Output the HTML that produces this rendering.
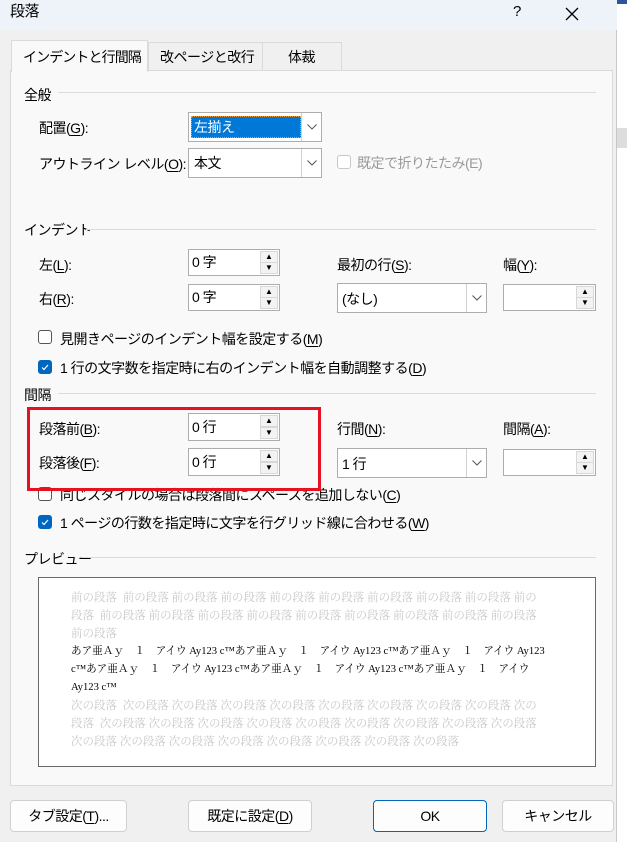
<!DOCTYPE html>
<html><head><meta charset="utf-8"><style>
*{box-sizing:border-box;margin:0;padding:0}
body{width:627px;height:842px;overflow:hidden;background:#f0f0f0;position:relative;font-family:"Liberation Sans","Noto Sans CJK JP",sans-serif;font-size:14px;color:#000}
.a{position:absolute;white-space:nowrap}
.t{line-height:16px;letter-spacing:-0.5px}
u{text-decoration:underline;text-underline-offset:2px}
.box{position:absolute;background:#fff;border:1px solid #adadad}
.spin .up,.spin .dn{position:absolute;right:1px;width:18px;height:12px;background:#f3f3f3;border:1px solid #d8d8d8;font-size:8px;line-height:10px;text-align:center;color:#000}
.spin .up{top:1px}.spin .dn{bottom:1px}
.combo .btn{position:absolute;right:0;top:0;bottom:0;width:20px;border-left:1px solid #d0d0d0;background:#fff}
.combo .btn svg{position:absolute;left:5px;top:11px}
.cb{position:absolute;width:14px;height:14px;border:1px solid #555;border-radius:3px;background:#fff}
.cb.on{background:#0067c0;border-color:#0067c0}
.line{position:absolute;height:1px;background:#dcdcdc}
.btnx{position:absolute;height:32px;background:#fdfdfd;border:1px solid #d0d0d0;border-radius:4px;text-align:center;line-height:30px;font-size:14px;letter-spacing:-0.5px}
.pv{position:absolute;left:71px;font-family:"Liberation Serif","Noto Serif CJK SC",serif;font-size:11.5px;line-height:18px;white-space:nowrap;color:#c8c8c8}
.pk{color:#000;font-size:10.6px}
</style></head><body>
<div class="a" style="left:617px;top:0;width:10px;height:842px;background:#fff"></div>
<div class="a" style="left:617px;top:0;width:10px;height:4px;background:#2b579a"></div>
<div class="a" style="left:617px;top:128px;width:10px;height:20px;background:#ddd"></div>
<div class="a" style="left:0;top:0;width:617px;height:842px;background:#f0f0f0;border-right:1px solid #c8c8c8"></div>
<div class="a" style="left:0;top:0;width:617px;height:30px;background:#eef2f9"></div>
<div class="a t" style="left:10px;top:4px;font-size:15px">段落</div>
<div class="a t" style="left:513px;top:4px;font-size:15px">?</div>
<svg class="a" style="left:565px;top:7px" width="14" height="14"><path d="M1 1L13 13M13 1L1 13" stroke="#000" stroke-width="1.3"/></svg>
<div class="a" style="left:148px;top:42px;width:115px;height:29px;background:#f0f0f0;border:1px solid #dadada"></div>
<div class="a" style="left:263px;top:42px;width:79px;height:29px;background:#f0f0f0;border:1px solid #dadada;border-left:none"></div>
<div class="a" style="left:10px;top:70px;width:603px;height:716px;background:#f9f9f9;border:1px solid #dadada"></div>
<div class="a" style="left:11px;top:40px;width:137px;height:32px;background:#f9f9f9;border:1px solid #dadada;border-bottom:none"></div>
<div class="a t" style="left:23px;top:49px;letter-spacing:-0.9px">インデントと行間隔</div>
<div class="a t" style="left:160px;top:49px">改ページと改行</div>
<div class="a t" style="left:288px;top:49px">体裁</div>
<div class="a t" style="left:24px;top:87px">全般</div><div class="line" style="left:58px;top:92px;width:538px"></div>
<div class="a t" style="left:39px;top:120px">配置(<u>G</u>):</div>
<div class="box combo" style="left:188px;top:112px;width:134px;height:30px"><div class="a" style="left:2px;top:3px;width:110px;height:22px;background:#0078d7;border:1px dotted #f0a040"></div><div class="a t" style="left:5px;top:6px;color:#fff">左揃え</div><div class="btn"><svg width="10" height="6"><path d="M0.5 0.5L5 5L9.5 0.5" fill="none" stroke="#555"/></svg></div></div>
<div class="a t" style="left:39px;top:156px">アウトライン レベル(<u>O</u>):</div>
<div class="box combo" style="left:188px;top:148px;width:134px;height:30px"><div class="a t" style="left:5px;top:6px">本文</div><div class="btn"><svg width="10" height="6"><path d="M0.5 0.5L5 5L9.5 0.5" fill="none" stroke="#555"/></svg></div></div>
<div class="cb" style="left:337px;top:155px;border-color:#c8c8c8"></div>
<div class="a t" style="left:357px;top:155px;color:#9a9a9a">既定で折りたたみ(E)</div>
<div class="a t" style="left:24px;top:222px">インデント</div><div class="line" style="left:86px;top:229px;width:510px"></div>
<div class="a t" style="left:39px;top:257px">左(<u>L</u>):</div>
<div class="box spin" style="left:188px;top:249px;width:92px;height:27px"><div class="a t" style="left:3px;top:4px">0 字</div><div class="up">▲</div><div class="dn">▼</div></div>
<div class="a t" style="left:337px;top:257px">最初の行(<u>S</u>):</div>
<div class="a t" style="left:503px;top:257px">幅(<u>Y</u>):</div>
<div class="a t" style="left:39px;top:291px">右(<u>R</u>):</div>
<div class="box spin" style="left:188px;top:284px;width:92px;height:27px"><div class="a t" style="left:3px;top:4px">0 字</div><div class="up">▲</div><div class="dn">▼</div></div>
<div class="box combo" style="left:337px;top:283px;width:150px;height:30px"><div class="a t" style="left:4px;top:7px">(なし)</div><div class="btn"><svg width="10" height="6"><path d="M0.5 0.5L5 5L9.5 0.5" fill="none" stroke="#555"/></svg></div></div>
<div class="box spin" style="left:503px;top:284px;width:93px;height:27px"><div class="up">▲</div><div class="dn">▼</div></div>
<div class="cb" style="left:38px;top:330px"></div>
<div class="a t" style="left:60px;top:331px">見開きページのインデント幅を設定する(<u>M</u>)</div>
<div class="cb on" style="left:38px;top:360px"><svg width="12" height="12" style="position:absolute;left:0;top:0"><path d="M3 6.5L5 8.5L9 4" fill="none" stroke="#fff" stroke-width="1.2"/></svg></div>
<div class="a t" style="left:60px;top:360px">1 行の文字数を指定時に右のインデント幅を自動調整する(<u>D</u>)</div>
<div class="a t" style="left:24px;top:387px">間隔</div><div class="line" style="left:58px;top:393px;width:538px"></div>
<div class="a t" style="left:39px;top:421px">段落前(<u>B</u>):</div>
<div class="box spin" style="left:188px;top:413px;width:92px;height:28px"><div class="a t" style="left:3px;top:5px">0 行</div><div class="up">▲</div><div class="dn">▼</div></div>
<div class="a t" style="left:39px;top:455px">段落後(<u>F</u>):</div>
<div class="box spin" style="left:188px;top:448px;width:92px;height:28px"><div class="a t" style="left:3px;top:5px">0 行</div><div class="up">▲</div><div class="dn">▼</div></div>
<div class="a t" style="left:337px;top:421px">行間(<u>N</u>):</div>
<div class="a t" style="left:503px;top:421px">間隔(<u>A</u>):</div>
<div class="box combo" style="left:337px;top:448px;width:150px;height:30px"><div class="a t" style="left:4px;top:7px">1 行</div><div class="btn"><svg width="10" height="6"><path d="M0.5 0.5L5 5L9.5 0.5" fill="none" stroke="#555"/></svg></div></div>
<div class="box spin" style="left:503px;top:449px;width:93px;height:27px"><div class="up">▲</div><div class="dn">▼</div></div>
<div class="cb" style="left:38px;top:487px"></div>
<div class="a t" style="left:60px;top:487px">同じスタイルの場合は段落間にスペースを追加しない(<u>C</u>)</div>
<div class="a" style="left:27px;top:407px;width:294px;height:84px;border:3px solid #e81123"></div>
<div class="cb on" style="left:38px;top:515px"><svg width="12" height="12" style="position:absolute;left:0;top:0"><path d="M3 6.5L5 8.5L9 4" fill="none" stroke="#fff" stroke-width="1.2"/></svg></div>
<div class="a t" style="left:60px;top:515px">1 ページの行数を指定時に文字を行グリッド線に合わせる(<u>W</u>)</div>
<div class="a t" style="left:24px;top:551px">プレビュー</div><div class="line" style="left:82px;top:557px;width:514px"></div>
<div class="a" style="left:38px;top:577px;width:558px;height:190px;background:#fff;border:1px solid #6a6a6a"></div>
<div class="pv" style="top:589px">前の段落 &nbsp;前の段落 前の段落 前の段落 前の段落 前の段落 前の段落 前の段落 前の段落 前の</div>
<div class="pv" style="top:607px">段落 &nbsp;前の段落 前の段落 前の段落 前の段落 前の段落 前の段落 前の段落 前の段落 前の段落</div>
<div class="pv" style="top:625px">前の段落</div>
<div class="pv pk" style="top:643px">あア亜Ａｙ　１　アイウ Ay123 c™あア亜Ａｙ　１　アイウ Ay123 c™あア亜Ａｙ　１　アイウ Ay123</div>
<div class="pv pk" style="top:661px">c™あア亜Ａｙ　１　アイウ Ay123 c™あア亜Ａｙ　１　アイウ Ay123 c™あア亜Ａｙ　１　アイウ</div>
<div class="pv pk" style="top:679px">Ay123 c™</div>
<div class="pv" style="top:697px">次の段落 &nbsp;次の段落 次の段落 次の段落 次の段落 次の段落 次の段落 次の段落 次の段落 次の</div>
<div class="pv" style="top:715px">段落 &nbsp;次の段落 次の段落 次の段落 次の段落 次の段落 次の段落 次の段落 次の段落 次の段落</div>
<div class="pv" style="top:733px">次の段落 次の段落 次の段落 次の段落 次の段落 次の段落 次の段落 次の段落</div>
<div class="btnx" style="left:10px;top:800px;width:117px">タブ設定(<u>T</u>)...</div>
<div class="btnx" style="left:188px;top:800px;width:124px">既定に設定(<u>D</u>)</div>
<div class="btnx" style="left:373px;top:800px;width:114px;border-color:#0067c0">OK</div>
<div class="btnx" style="left:502px;top:800px;width:112px">キャンセル</div>
</body></html>
